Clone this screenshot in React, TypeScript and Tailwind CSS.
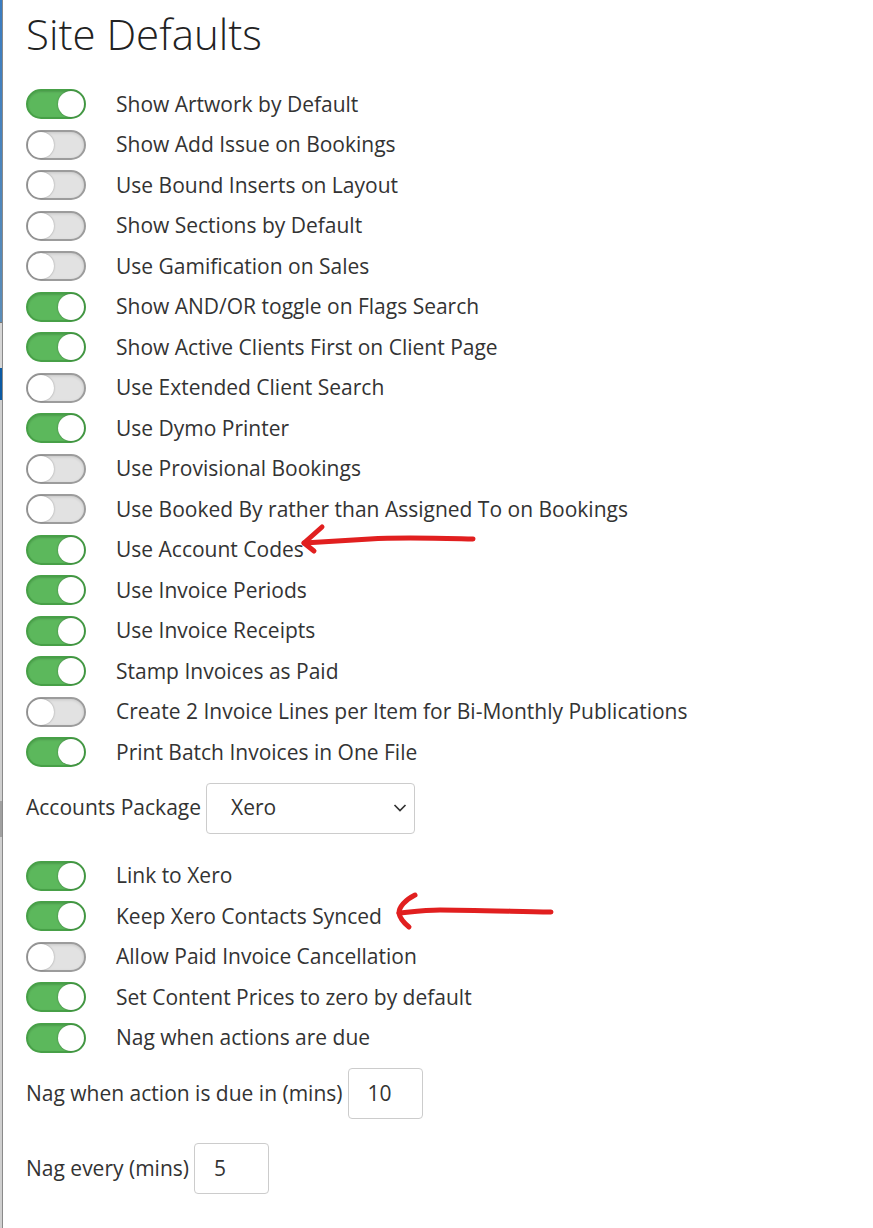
import React from "react";

type Setting = {
    label: string
    on: boolean
}

const mainSettings: Setting[] = [
    {label: "Show Artwork by Default", on: true},
    {label: "Show Add Issue on Bookings", on: false},
    {label: "Use Bound Inserts on Layout", on: false},
    {label: "Show Sections by Default", on: false},
    {label: "Use Gamification on Sales", on: false},
    {label: "Show AND/OR toggle on Flags Search", on: true},
    {label: "Show Active Clients First on Client Page", on: true},
    {label: "Use Extended Client Search", on: false},
    {label: "Use Dymo Printer", on: true},
    {label: "Use Provisional Bookings", on: false},
    {label: "Use Booked By rather than Assigned To on Bookings", on: false},
    {label: "Use Account Codes", on: true},
    {label: "Use Invoice Periods", on: true},
    {label: "Use Invoice Receipts", on: true},
    {label: "Stamp Invoices as Paid", on: true},
    {label: "Create 2 Invoice Lines per Item for Bi-Monthly Publications", on: false},
    {label: "Print Batch Invoices in One File", on: true},
];

const xeroSettings: Setting[] = [
    {label: "Link to Xero", on: true},
    {label: "Keep Xero Contacts Synced", on: true},
    {label: "Allow Paid Invoice Cancellation", on: false},
    {label: "Set Content Prices to zero by default", on: true},
    {label: "Nag when actions are due", on: true},
];

function Toggle({on}: { on: boolean }) {
    return (
        <div
            className={`relative w-[60px] h-[30px] rounded-full border-2 shrink-0 ${on
                ? "bg-[#5cb85c] border-[#47a047] shadow-[inset_0_1px_2px_rgba(0,0,0,0.15)]"
                : "bg-[#e2e2e2] border-[#9c9c9c] shadow-[inset_0_1px_3px_rgba(0,0,0,0.12)]"}`}
        >
            <div
                className={`absolute top-[0px] w-[26px] h-[26px] rounded-full bg-white shadow-[0_0_2px_rgba(0,0,0,0.35)] ${on ? "right-[0px]" : "left-[0px]"}`}></div>
        </div>
    );
}

function SettingRow({data}: { data: Setting }) {
    return (
        <div className="flex items-center h-[40.5px]">
            <Toggle on={data.on}/>
            <span className="ml-[30px] text-[21px] text-[#333]">{data.label}</span>
        </div>
    );
}

function NumberField({label, value}: { label: string, value: string }) {
    return (
        <div className="flex items-center">
            <span className="text-[21px] text-[#333]">{label}</span>
            <div
                className="ml-[5px] w-[75px] h-[51px] border border-[#ccc] rounded-[4px] flex items-center pl-[19px] text-[21px] text-[#333] bg-white">
                {value}
            </div>
        </div>
    );
}

export default function App() {
    return (
        <div className="flex min-h-[1228px] bg-white" style={{fontFamily: '"Open Sans", "Liberation Sans", sans-serif'}}>
            {/* left edge of the neighbouring panel */}
            <div className="w-[3px] shrink-0 flex flex-col border-r border-[#8a8a8a]">
                <div className="h-[322px] bg-gradient-to-b from-[#3a7cc0] to-[#5b8db8]"></div>
                <div className="h-[1px] bg-[#777]"></div>
                <div className="h-[45px] bg-[#d6d6d6]"></div>
                <div className="h-[32px] bg-[#0b5aa3]"></div>
                <div className="h-[401px] bg-[#cfcfcf]"></div>
                <div className="h-[36px] bg-[#a0a0a0]"></div>
                <div className="flex-1 bg-[#cfcfcf]"></div>
            </div>

            <div className="relative flex-1 pl-[23px]">
                <h1 className="pt-[12px] text-[42px] leading-[44px] font-light text-[#222] mb-[28px]">Site Defaults</h1>

                <div className="flex flex-col">
                    {mainSettings.map(s => <SettingRow key={s.label} data={s}/>)}
                </div>

                <div className="flex items-center mt-[10px]">
                    <span className="text-[21px] text-[#333]">Accounts Package</span>
                    <div
                        className="ml-[5px] w-[209px] h-[51px] border border-[#ccc] rounded-[4px] flex items-center justify-between pl-[24px] pr-[7px] text-[21px] text-[#333] bg-white">
                        <span>Xero</span>
                        <svg className="w-[14px] h-[14px]" viewBox="0 0 14 14" fill="none" stroke="#333"
                             strokeWidth={1.7}>
                            <path d="M1.5 4 L7 9.5 L12.5 4"/>
                        </svg>
                    </div>
                </div>

                <div className="flex flex-col mt-[22px]">
                    {xeroSettings.map(s => <SettingRow key={s.label} data={s}/>)}
                </div>

                <div className="mt-[10px]">
                    <NumberField label="Nag when action is due in (mins)" value="10"/>
                </div>
                <div className="mt-[24px]">
                    <NumberField label="Nag every (mins)" value="5"/>
                </div>

                {/* red annotation arrows */}
                <svg className="absolute top-0 left-[-3px] pointer-events-none" width="873" height="1228"
                     viewBox="0 0 873 1228" fill="none" stroke="#e11f1f" strokeWidth={5} strokeLinecap="round"
                     strokeLinejoin="round">
                    <path d="M473 539 C430 538 400 537 370 539 C340 541 320 542 304 543"/>
                    <path d="M322 527 L304 543 L314 551"/>
                    <path d="M551 912 C500 911 460 910 440 910 C425 910 410 912 399 913"/>
                    <path d="M415 895 C405 900 399 907 399 913 C400 919 404 923 409 927"/>
                </svg>
            </div>
        </div>
    );
}
